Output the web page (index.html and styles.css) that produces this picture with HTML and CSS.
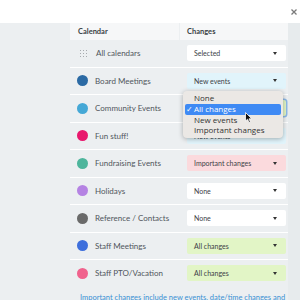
FILE: index.html
```html
<!DOCTYPE html>
<html lang="en">
<head>
    <meta charset="UTF-8">
    <title>Notification settings</title>
    <link rel="stylesheet" href="styles.css">
</head>
<body>

    <div class="modal">
        <div class="topbar">
            <svg class="close" width="6" height="6" viewBox="0 0 6 6"><path d="M0.5 0.5 L5.5 5.5 M5.5 0.5 L0.5 5.5" stroke="#7a7a7a" stroke-width="1.3"/></svg>
        </div>

        <div class="content">
            <div class="table">
                <div class="thead">
                    <span class="col-cal">Calendar</span>
                    <span class="col-chg">Changes</span>
                </div>

                <div class="row">
                    <span class="cal"><i class="grid-icon"></i>All calendars</span>
                    <span class="col-chg"><span class="select">Selected<i class="caret"></i></span></span>
                </div>
                <div class="row">
                    <span class="cal"><i class="dot board"></i>Board Meetings</span>
                    <span class="col-chg"><span class="select blue">New events<i class="caret"></i></span></span>
                </div>
                <div class="row">
                    <span class="cal"><i class="dot community"></i>Community Events</span>
                    <span class="col-chg"><span class="select green focused">All changes<i class="caret"></i></span></span>
                </div>
                <div class="row">
                    <span class="cal"><i class="dot fun"></i>Fun stuff!</span>
                    <span class="col-chg"><span class="select blue">New events<i class="caret"></i></span></span>
                </div>
                <div class="row">
                    <span class="cal"><i class="dot fundraising"></i>Fundraising Events</span>
                    <span class="col-chg"><span class="select pink">Important changes<i class="caret"></i></span></span>
                </div>
                <div class="row">
                    <span class="cal"><i class="dot holidays"></i>Holidays</span>
                    <span class="col-chg"><span class="select">None<i class="caret"></i></span></span>
                </div>
                <div class="row">
                    <span class="cal"><i class="dot reference"></i>Reference / Contacts</span>
                    <span class="col-chg"><span class="select">None<i class="caret"></i></span></span>
                </div>
                <div class="row">
                    <span class="cal"><i class="dot staff"></i>Staff Meetings</span>
                    <span class="col-chg"><span class="select green">All changes<i class="caret"></i></span></span>
                </div>
                <div class="row">
                    <span class="cal"><i class="dot pto"></i>Staff PTO/Vacation</span>
                    <span class="col-chg"><span class="select green">All changes<i class="caret"></i></span></span>
                </div>

                <!-- menu open on Community Events -->
                <ul class="menu">
                    <li>None</li>
                    <li class="active"><span class="check">✓</span>All changes</li>
                    <li>New events</li>
                    <li>Important changes</li>
                </ul>
                <svg class="cursor" width="8" height="12" viewBox="0 0 8 12"><path d="M0.5 0.5 L0.5 9 L2.6 7.2 L4 10.6 L5.4 10 L4 6.8 L6.8 6.8 Z" fill="#111" stroke="#fff" stroke-width="0.8"/></svg>
            </div>

            <p class="note">Important changes include new events, date/time changes and</p>
        </div>
    </div>

</body>
</html>
```

FILE: styles.css
```css
body {
    margin: 0;
    font-family: 'Lato', sans-serif;
    color: #4a4f55;
    background: #eceff1;
}

.modal {
    width: 300px;
    height: 300px;
    overflow: hidden;
}

.topbar {
    height: 23px;
    background: #fff;
    display: flex;
    justify-content: flex-end;
    align-items: center;
    padding-right: 3px;
}

.close {
    display: block;
}

.content {
    background: #eceff1;
    padding: 0 12px 0 70px;
    box-shadow: inset -12px 0 0 #e7ebed;
}

.table {
    position: relative;
}

/* header */
.thead {
    display: flex;
    height: 17px;
    background: #f6f7f8;
    font-size: 7.5px;
    font-weight: 700;
    color: #3a3f45;
}

.thead span {
    display: flex;
    align-items: center;
}

.col-cal {
    width: 110px;
    padding-left: 8px;
    box-sizing: border-box;
    border-right: 1px solid #eceff1;
}

.col-chg {
    flex: 1;
    padding-left: 7px;
}

/* rows */
.row {
    display: flex;
    align-items: center;
    height: 26.5px;
    border-bottom: 1px solid #fff;
}

.row:last-of-type {
    border-bottom: none;
}

.cal {
    width: 110px;
    display: flex;
    align-items: center;
    padding-left: 7px;
    box-sizing: border-box;
    font-size: 8px;
    color: #50565c;
    white-space: nowrap;
}

.dot {
    width: 11px;
    height: 11px;
    border-radius: 50%;
    margin-right: 7px;
    flex-shrink: 0;
}

.dot.board { background: #2b6aa4; }
.dot.community { background: #45a8d6; }
.dot.fun { background: #e8186d; }
.dot.fundraising { background: #4db59c; }
.dot.holidays { background: #b583e3; }
.dot.reference { background: #6a6a6a; }
.dot.staff { background: #3e6fdc; }
.dot.pto { background: #f0628d; }

.grid-icon {
    width: 9px;
    height: 9px;
    margin: 0 8px 0 2px;
    flex-shrink: 0;
    background-image: radial-gradient(circle, #a6aaae 0.8px, transparent 1px);
    background-size: 3px 3px;
}

.select {
    display: flex;
    align-items: center;
    justify-content: space-between;
    width: 99px;
    height: 16px;
    box-sizing: border-box;
    padding: 0 9px 0 7px;
    background: #fff;
    border-radius: 2px;
    font-size: 7px;
    color: #3d4247;
}

.select.blue { background: #e1f4fb; }
.select.green { background: #e2f5c6; }
.select.pink { background: #fbdadd; }

.select.focused {
    box-shadow: 0 0 0 1.5px #8db8e6;
}

.caret {
    width: 0;
    height: 0;
    border-left: 2.5px solid transparent;
    border-right: 2.5px solid transparent;
    border-top: 3px solid #333;
}

/* open select menu */
.menu {
    position: absolute;
    left: 113px;
    top: 68px;
    width: 100px;
    margin: 0;
    padding: 2px 2px;
    box-sizing: border-box;
    list-style: none;
    background: #ebe8e5;
    border-radius: 4px;
    box-shadow: 0 1px 5px rgba(0, 0, 0, 0.3);
    font-family: 'Open Sans', sans-serif;
    font-size: 8px;
    color: #333;
}

.menu li {
    height: 10.75px;
    line-height: 10.75px;
    padding-left: 9px;
    position: relative;
    border-radius: 2px;
}

.menu li.active {
    background: #3f8af4;
    color: #fff;
}

.check {
    position: absolute;
    left: 1px;
}

.cursor {
    position: absolute;
    left: 175px;
    top: 89px;
}

.note {
    margin: 0;
    padding: 6px 0 0 10px;
    font-size: 7.5px;
    color: #3a8fd3;
    white-space: nowrap;
}
```
